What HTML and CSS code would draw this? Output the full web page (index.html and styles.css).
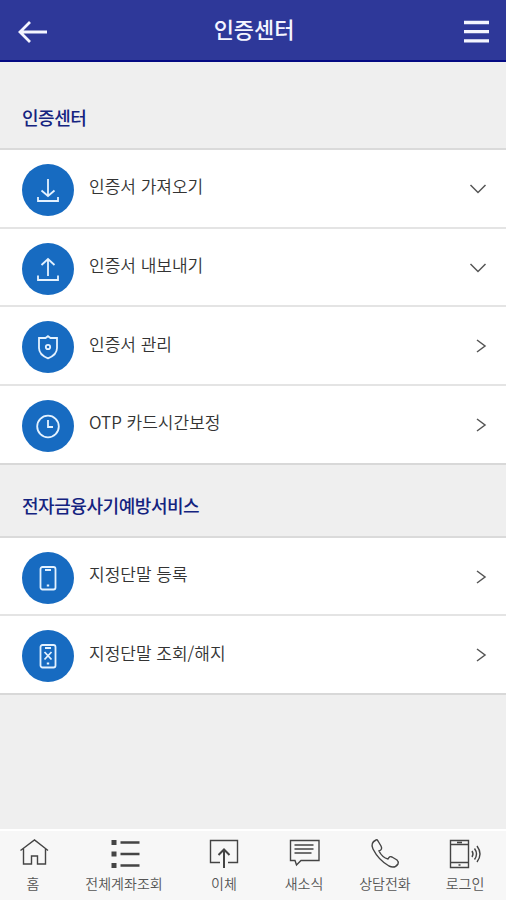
FILE: index.html
```html
<!DOCTYPE html>
<html lang="ko">
<head>
<meta charset="utf-8">
<title>인증센터</title>
<link rel="stylesheet" href="styles.css">
</head>
<body>
<div class="app">
  <header class="topbar">
    <svg class="back" width="32" height="24" viewBox="0 0 32 24"><path d="M30 12H3M13 2 3 12l10 10"/></svg>
    <h1>인증센터</h1>
    <svg class="menu" width="26" height="24" viewBox="0 0 26 24"><path d="M0 2.5h25M0 11.7h25M0 20.9h25"/></svg>
  </header>
  <main>
    <h2 class="first">인증센터</h2>
    <ul class="list">
      <li>
        <span class="disc"><svg viewBox="0 0 24 24"><path d="M12 1v17M5.500 12.500l6.500 5.500 6.500-5.500M2 19v4h20v-4"/></svg></span>
        <span class="label">인증서 가져오기</span>
        <svg class="chev" width="18" height="16" viewBox="0 0 18 16"><path d="M1.500 4 9 11.500 16.500 4"/></svg>
      </li>
      <li>
        <span class="disc"><svg viewBox="0 0 24 24"><path d="M12 19V2M5.500 8 12 2l6.500 6M2 18.500v4.500h20v-4.500"/></svg></span>
        <span class="label">인증서 내보내기</span>
        <svg class="chev" width="18" height="16" viewBox="0 0 18 16"><path d="M1.500 4 9 11.500 16.500 4"/></svg>
      </li>
      <li>
        <span class="disc"><svg viewBox="0 0 24 24"><path d="M12 1.200 14.500 3H21v10c0 4.500-3 8-9 10.300C6 21 3 17.500 3 13V3h6.500z"/><circle cx="12" cy="12" r="2.200"/></svg></span>
        <span class="label">인증서 관리</span>
        <svg class="chev" width="18" height="16" viewBox="0 0 18 16"><path d="M8 2l8 6-8 6"/></svg>
      </li>
      <li>
        <span class="disc"><svg viewBox="0 0 24 24"><circle cx="12" cy="12.500" r="10.800"/><path d="M12 6v7h5"/></svg></span>
        <span class="label">OTP 카드시간보정</span>
        <svg class="chev" width="18" height="16" viewBox="0 0 18 16"><path d="M8 2l8 6-8 6"/></svg>
      </li>
    </ul>
    <h2>전자금융사기예방서비스</h2>
    <ul class="list">
      <li>
        <span class="disc"><svg viewBox="0 0 24 24"><rect x="4.500" y="1" width="15" height="22.500" rx="2"/><path d="M9 4h6M10.800 19.500h2.400"/></svg></span>
        <span class="label">지정단말 등록</span>
        <svg class="chev" width="18" height="16" viewBox="0 0 18 16"><path d="M8 2l8 6-8 6"/></svg>
      </li>
      <li>
        <span class="disc"><svg viewBox="0 0 24 24"><rect x="4.500" y="1" width="15" height="22.500" rx="2"/><path d="M9 4h6M10.800 19.500h2.400M8.500 8l7 7.500M15.500 8l-7 7.500"/></svg></span>
        <span class="label">지정단말 조회/해지</span>
        <svg class="chev" width="18" height="16" viewBox="0 0 18 16"><path d="M8 2l8 6-8 6"/></svg>
      </li>
    </ul>
  </main>
  <nav class="tabs">
    <a><svg viewBox="0 0 32 32"><path d="M3.500 13.500 17.500 3l13.500 10.500M6.500 11.500V27h8v-8h6v8h8V11.500"/></svg><span>홈</span></a>
    <a><svg viewBox="0 0 32 32"><path class="bar" d="M12.500 5.500h19M12.500 17h19M12.500 28.500h19"/><path class="dot" d="M3.500 5.500h5M3.500 17h5M3.500 28.500h5"/></svg><span>전체계좌조회</span></a>
    <a><svg viewBox="0 0 32 32"><path d="M12 25.500H2.500V3.500h27v22H20"/><path class="up" d="M16 31V13M10.500 18 16 12.500l5.500 5.500"/></svg><span>이체</span></a>
    <a><svg viewBox="0 0 32 32"><path d="M2.500 3.500H31v20H13L8.500 28 7 23.500H2.500zM6.500 8h19M6.500 12h19M6.500 16h17"/></svg><span>새소식</span></a>
    <a><svg viewBox="0 0 32 32"><path d="M7 3c-4 2-5 5-3 9 4 8 9 13 16 17 4 2 7 1 9-2 1-2 0-3-1-4l-5-3c-2-1-3 0-4 2-4-1-7-4-9-8 3-1 3-3 2-5l-3-5C8 2.500 7.500 2.500 7 3z"/></svg><span>상담전화</span></a>
    <a><svg viewBox="0 0 32 32"><path d="M1.500 3.500h18v27h-18zM1.500 7.500h18M1.500 25.500h18M8 5.500h5M9.500 28h2M23 14q2 3 0 6M25.500 11.500q4 5.500 0 11M28 9q6 8 0 16"/></svg><span>로그인</span></a>
  </nav>
</div>
</body>
</html>
```
FILE: styles.css
```css
* { box-sizing: border-box; }
body {
  margin: 0;
  background: #efefef;
  font-family: "Noto Sans CJK KR", sans-serif;
}
.app {
  height: 900px;
  display: flex;
  flex-direction: column;
}
svg {
  display: block;
  overflow: visible;
  fill: none;
  stroke: currentColor;
}
.topbar {
  height: 62px;
  display: grid;
  grid-template-columns: 60px 1fr 60px;
  align-items: center;
  background: #2e3899;
  border-bottom: 2px solid #040a83;
  color: #f4f5ff;
}
.topbar h1 {
  margin: 0;
  padding: 0 0 4px 2px;
  font-size: 22px;
  line-height: 30px;
  font-weight: 500;
  text-align: center;
  letter-spacing: -0.1px;
}
.back { margin: 4px 0 0 17px; stroke-width: 2.8; }
.menu { margin: 3px 0 0 18px; stroke-width: 3.3; }
main { flex: 1; }
h2 {
  height: 71px;
  margin: 0;
  padding: 26px 22px 0;
  font-size: 18px;
  line-height: 28px;
  font-weight: 500;
  letter-spacing: -0.45px;
  color: #14237f;
}
h2.first { height: 86px; padding-top: 41px; }
.list {
  margin: 0;
  padding: 0;
  list-style: none;
  border-top: 2px solid #dadada;
}
.list li {
  height: 78.700px;
  display: flex;
  align-items: center;
  padding: 1px 19px 0 22px;
  background: #fff;
  border-bottom: 2px solid #e4e4e4;
}
.list li:last-child { border-color: #d8d8d8; }
.disc {
  width: 52px;
  height: 52px;
  margin-top: 2px;
  display: grid;
  place-items: center;
  border-radius: 50%;
  background: #176bc1;
  color: #e4f2ff;
}
.disc svg { width: 24px; height: 24px; stroke-width: 1.8; }
.label {
  flex: 1;
  margin: -5px 0 0 15px;
  font-size: 17px;
  line-height: 26px;
  font-weight: 350;
  color: #333;
}
.chev { color: #555; stroke-width: 1.5; }
.tabs {
  height: 71px;
  display: grid;
  grid-template-columns: 66px 116px 84px 76px 86px 74px;
  padding-top: 6px;
  background: #f7f7f7;
  border-top: 2px solid #fff;
  color: #444;
}
.tabs a {
  display: flex;
  flex-direction: column;
  align-items: center;
}
.tabs svg { width: 32px; height: 32px; stroke-width: 1.4; }
.tabs span {
  margin-top: 3px;
  font-size: 14px;
  line-height: 22px;
  font-weight: 350;
  white-space: nowrap;
  color: #555;
}
.tabs .bar { stroke-width: 2.5; }
.tabs .dot { stroke-width: 5; stroke-dasharray: none; }
.tabs .up { stroke-width: 2; }
```
